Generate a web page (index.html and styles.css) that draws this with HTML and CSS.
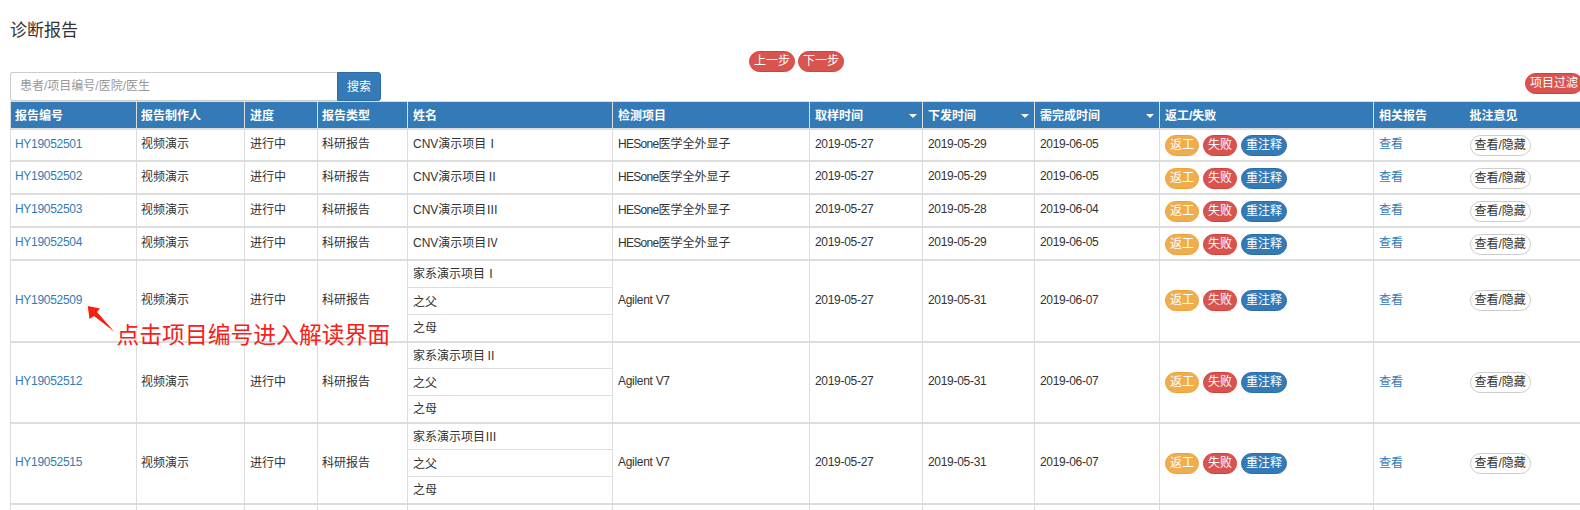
FILE: index.html
```html
<!DOCTYPE html>
<html lang="zh-CN">
<head>
<meta charset="utf-8">
<title>诊断报告</title>
<link rel="stylesheet" href="styles.css">
</head>
<body>
<div class="page">
  <h3 class="title">诊断报告</h3>
  <div class="steps">
    <button class="pill red">上一步</button>
    <button class="pill red">下一步</button>
  </div>
  <div class="toolbar">
    <div class="search">
      <input class="search-input" type="text" placeholder="患者/项目编号/医院/医生">
      <button class="search-btn">搜索</button>
    </div>
    <button class="pill red filter">项目过滤</button>
  </div>
  <table class="report">
    <colgroup>
      <col class="c1"><col class="c2"><col class="c3"><col class="c4"><col class="c5"><col class="c6"><col class="c7"><col class="c8"><col class="c9"><col class="c10"><col class="c11"><col class="c12">
    </colgroup>
    <thead>
      <tr>
        <th>报告编号</th><th>报告制作人</th><th>进度</th><th>报告类型</th><th>姓名</th><th>检测项目</th>
        <th><div class="sort">取样时间<i class="caret"></i></div></th>
        <th><div class="sort">下发时间<i class="caret"></i></div></th>
        <th><div class="sort">需完成时间<i class="caret"></i></div></th>
        <th>返工/失败</th><th class="nb">相关报告</th><th class="nb">批注意见</th>
      </tr>
    </thead>
    <tbody>
      <tr>
        <td class="num"><a href="#">HY19052501</a></td><td>视频演示</td><td>进行中</td><td>科研报告</td><td>CNV演示项目<span class="rn">Ⅰ</span></td><td><span class="en">HESone</span>医学全外显子</td><td class="num">2019-05-27</td><td class="num">2019-05-29</td><td class="num">2019-06-05</td>
        <td class="ops"><span class="pill orange">返工</span><span class="pill red">失败</span><span class="pill blue">重注释</span></td>
        <td class="nb"><a href="#">查看</a></td><td class="nb ops"><span class="pill plain">查看/隐藏</span></td>
      </tr>
      <tr>
        <td class="num"><a href="#">HY19052502</a></td><td>视频演示</td><td>进行中</td><td>科研报告</td><td>CNV演示项目<span class="rn">Ⅱ</span></td><td><span class="en">HESone</span>医学全外显子</td><td class="num">2019-05-27</td><td class="num">2019-05-29</td><td class="num">2019-06-05</td>
        <td class="ops"><span class="pill orange">返工</span><span class="pill red">失败</span><span class="pill blue">重注释</span></td>
        <td class="nb"><a href="#">查看</a></td><td class="nb ops"><span class="pill plain">查看/隐藏</span></td>
      </tr>
      <tr>
        <td class="num"><a href="#">HY19052503</a></td><td>视频演示</td><td>进行中</td><td>科研报告</td><td>CNV演示项目<span class="rn">Ⅲ</span></td><td><span class="en">HESone</span>医学全外显子</td><td class="num">2019-05-27</td><td class="num">2019-05-28</td><td class="num">2019-06-04</td>
        <td class="ops"><span class="pill orange">返工</span><span class="pill red">失败</span><span class="pill blue">重注释</span></td>
        <td class="nb"><a href="#">查看</a></td><td class="nb ops"><span class="pill plain">查看/隐藏</span></td>
      </tr>
      <tr>
        <td class="num"><a href="#">HY19052504</a></td><td>视频演示</td><td>进行中</td><td>科研报告</td><td>CNV演示项目<span class="rn">Ⅳ</span></td><td><span class="en">HESone</span>医学全外显子</td><td class="num">2019-05-27</td><td class="num">2019-05-29</td><td class="num">2019-06-05</td>
        <td class="ops"><span class="pill orange">返工</span><span class="pill red">失败</span><span class="pill blue">重注释</span></td>
        <td class="nb"><a href="#">查看</a></td><td class="nb ops"><span class="pill plain">查看/隐藏</span></td>
      </tr>
      <tr class="sub first grow">
        <td rowspan="3" class="num"><a href="#">HY19052509</a></td><td rowspan="3">视频演示</td><td rowspan="3">进行中</td><td rowspan="3">科研报告</td><td class="member">家系演示项目<span class="rn">Ⅰ</span></td><td rowspan="3" class="num">Agilent V7</td><td rowspan="3" class="num">2019-05-27</td><td rowspan="3" class="num">2019-05-31</td><td rowspan="3" class="num">2019-06-07</td>
        <td rowspan="3" class="ops"><span class="pill orange">返工</span><span class="pill red">失败</span><span class="pill blue">重注释</span></td>
        <td rowspan="3" class="nb"><a href="#">查看</a></td><td rowspan="3" class="nb ops"><span class="pill plain">查看/隐藏</span></td>
      </tr>
      <tr class="sub"><td class="member">之父</td></tr>
      <tr class="sub"><td class="member">之母</td></tr>
      <tr class="sub first">
        <td rowspan="3" class="num"><a href="#">HY19052512</a></td><td rowspan="3">视频演示</td><td rowspan="3">进行中</td><td rowspan="3">科研报告</td><td class="member">家系演示项目<span class="rn">Ⅱ</span></td><td rowspan="3" class="num">Agilent V7</td><td rowspan="3" class="num">2019-05-27</td><td rowspan="3" class="num">2019-05-31</td><td rowspan="3" class="num">2019-06-07</td>
        <td rowspan="3" class="ops"><span class="pill orange">返工</span><span class="pill red">失败</span><span class="pill blue">重注释</span></td>
        <td rowspan="3" class="nb"><a href="#">查看</a></td><td rowspan="3" class="nb ops"><span class="pill plain">查看/隐藏</span></td>
      </tr>
      <tr class="sub"><td class="member">之父</td></tr>
      <tr class="sub"><td class="member">之母</td></tr>
      <tr class="sub first">
        <td rowspan="3" class="num"><a href="#">HY19052515</a></td><td rowspan="3">视频演示</td><td rowspan="3">进行中</td><td rowspan="3">科研报告</td><td class="member">家系演示项目<span class="rn">Ⅲ</span></td><td rowspan="3" class="num">Agilent V7</td><td rowspan="3" class="num">2019-05-27</td><td rowspan="3" class="num">2019-05-31</td><td rowspan="3" class="num">2019-06-07</td>
        <td rowspan="3" class="ops"><span class="pill orange">返工</span><span class="pill red">失败</span><span class="pill blue">重注释</span></td>
        <td rowspan="3" class="nb"><a href="#">查看</a></td><td rowspan="3" class="nb ops"><span class="pill plain">查看/隐藏</span></td>
      </tr>
      <tr class="sub"><td class="member">之父</td></tr>
      <tr class="sub"><td class="member">之母</td></tr>
      <tr class="tail"><td></td><td></td><td></td><td></td><td></td><td></td><td></td><td></td><td></td><td></td><td class="nb"></td><td class="nb"></td></tr>
    </tbody>
  </table>
  <svg class="arrow" width="34" height="32" viewBox="0 0 34 32" aria-hidden="true">
    <path d="M1.700 1 L14 3.500 L11 7 L28.300 26.700 L8 11 L3.500 14 Z" fill="#f5200f"/>
  </svg>
  <div class="note">点击项目编号进入解读界面</div>
</div>
</body>
</html>
```
FILE: styles.css
```css
html, body {
  margin: 0;
  padding: 0;
  height: 510px;
  overflow: hidden;
  background: #fff;
}
body {
  font-family: "Liberation Sans", "Noto Sans CJK SC", sans-serif;
  font-size: 12px;
  color: #333;
}
.page {
  position: relative;
  width: 1580px;
  height: 510px;
  overflow: hidden;
  padding: 20px 0 0 10px;
  box-sizing: border-box;
}
.title {
  margin: 0;
  font-size: 17px;
  font-weight: 400;
  line-height: 22px;
  height: 31px;
  color: #333;
}
.steps {
  display: flex;
  justify-content: center;
  gap: 3px;
  height: 21px;
  padding-left: 3px;
}
.toolbar {
  display: flex;
  justify-content: space-between;
  align-items: flex-start;
  height: 29px;
  margin-right: -3px;
}
.search {
  display: flex;
  width: 371px;
  height: 29px;
}
.search-input {
  flex: 1;
  min-width: 0;
  box-sizing: border-box;
  height: 29px;
  padding: 0 9px 2px;
  border: 1px solid #ccc;
  border-right: 0;
  border-radius: 3px 0 0 3px;
  font: 12px "Liberation Sans", "Noto Sans CJK SC", sans-serif;
  color: #333;
  outline: 0;
}
.search-input::placeholder {
  color: #999;
}
.search-btn {
  width: 44px;
  height: 29px;
  padding: 0 0 2px;
  border: 1px solid #2e6da4;
  border-radius: 0 3px 3px 0;
  background: #337ab7;
  color: #fff;
  font: 12px "Liberation Sans", "Noto Sans CJK SC", sans-serif;
}
.pill {
  display: inline-block;
  box-sizing: border-box;
  height: 21px;
  padding: 0 4px;
  border: 1px solid transparent;
  border-radius: 11px;
  font: 12px/19px "Liberation Sans", "Noto Sans CJK SC", sans-serif;
  color: #fff;
  white-space: nowrap;
  vertical-align: middle;
}
.pill + .pill {
  margin-left: 4px;
}
.steps .pill + .pill {
  margin-left: 0;
}
.red {
  background: #d9534f;
  border-color: #d43f3a;
}
.orange {
  background: #f0ad4e;
  border-color: #eea236;
}
.blue {
  background: #337ab7;
  border-color: #2e6da4;
}
.plain {
  background: #fff;
  border-color: #ccc;
  color: #333;
}
.filter {
  margin-top: 1px;
}
.report {
  table-layout: fixed;
  width: 1570px;
  border-collapse: collapse;
}
.c1 { width: 126px; }
.c2 { width: 108px; }
.c3 { width: 73px; }
.c4 { width: 90px; }
.c5 { width: 205px; }
.c6 { width: 197px; }
.c7 { width: 113px; }
.c8 { width: 112px; }
.c9 { width: 125px; }
.c10 { width: 214px; }
.c11 { width: 91px; }
.c12 { width: 116px; }
.report th, .report td {
  box-sizing: border-box;
  padding: 0 5px;
  border: 1px solid #ddd;
  text-align: left;
  vertical-align: middle;
  white-space: nowrap;
  overflow: hidden;
}
.report th {
  height: 27px;
  background: #337ab7;
  color: #fff;
  font-weight: 700;
  border-bottom: 2px solid #ddd;
}
.report td {
  height: 33px;
  padding-bottom: 4px;
}
.report td.num {
  padding-bottom: 2px;
  letter-spacing: -0.3px;
}
.report td.ops {
  padding-bottom: 0;
}
.report td.member {
  padding-bottom: 2px;
}
.report tr:not(.sub) > td.ops {
  padding-top: 2px;
}
.report tr > :nth-child(1),
.report tr > :nth-child(2),
.report tr > :nth-child(4) {
  padding-left: 4px;
}
.report tr.sub:not(.first) > td {
  padding-left: 5px;
}
.report tbody tr {
  border-top: 2px solid #ddd;
}
.report tbody tr:first-child td {
  height: 32px;
}
.report th.nb, .report td.nb {
  border-left: 0;
  border-right: 0;
}
.report tbody tr.sub {
  border-top: 0;
}
.report tbody tr.sub.first {
  border-top: 2px solid #ddd;
}
.report tr.sub td {
  height: 27px;
}
.report tr.grow td {
  height: 28px;
}
.report tr.tail td {
  height: 30px;
}
.report a {
  color: #337ab7;
  text-decoration: none;
}
.en {
  letter-spacing: -0.7px;
}
.rn {
  font-family: "Noto Sans CJK SC", sans-serif;
}
.sort {
  display: flex;
  justify-content: space-between;
  align-items: center;
}
.caret {
  display: block;
  width: 0;
  height: 0;
  margin: 3px 0 0;
  border-left: 4px solid transparent;
  border-right: 4px solid transparent;
  border-top: 4px solid #fff;
}
.arrow {
  position: absolute;
  left: 86px;
  top: 305px;
}
.note {
  position: absolute;
  left: 116.500px;
  top: 319px;
  font-family: "Noto Sans CJK SC", sans-serif;
  font-size: 22.800px;
  line-height: 30px;
  color: #f5211a;
  white-space: nowrap;
}
```
